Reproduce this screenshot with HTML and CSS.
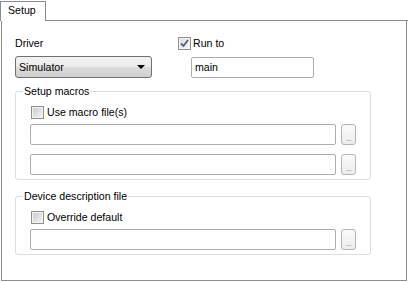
FILE: index.html
```html
<!DOCTYPE html>
<html lang="en">
  <head>
    <meta charset="UTF-8" />
    <title>Setup</title>
    <link rel="stylesheet" href="styles.css">
  </head>
  <body>
    <div class="tabstrip">
      <div class="tab">Setup</div>
      <div class="tab-fill"></div>
    </div>
    <div class="panel">
      <div class="top-row">
        <div class="driver">
          <div class="label">Driver</div>
          <div class="combo">
            <span>Simulator</span>
            <span class="arrow"></span>
          </div>
        </div>
        <div class="runto">
          <label class="check">
            <span class="box checked">
              <svg width="9" height="9" viewBox="0 0 9 9">
                <path d="M1 4.5 L3.5 7 L8 1" fill="none" stroke="#4d6185" stroke-width="1.8" />
              </svg>
            </span>
            Run to
          </label>
          <div class="textbox short">main</div>
        </div>
      </div>

      <fieldset class="group">
        <legend>Setup macros</legend>
        <label class="check"><span class="box"></span>Use macro file(s)</label>
        <div class="file-row first">
          <div class="textbox wide"></div>
          <div class="browse">...</div>
        </div>
        <div class="file-row">
          <div class="textbox wide"></div>
          <div class="browse">...</div>
        </div>
      </fieldset>

      <fieldset class="group second">
        <legend>Device description file</legend>
        <label class="check"><span class="box"></span>Override default</label>
        <div class="file-row first">
          <div class="textbox wide"></div>
          <div class="browse">...</div>
        </div>
      </fieldset>
    </div>
  </body>
</html>
```

FILE: styles.css
```css
body {
  margin: 0;
  background-color: #ffffff;
  font-family: "Liberation Sans", Arial, sans-serif;
  font-size: 10.6px;
  line-height: 13px;
  color: #000000;
}

.tabstrip {
  display: flex;
  align-items: flex-end;
  height: 21px;
}

.tab {
  width: 46px;
  height: 20px;
  padding: 2px 0 0 7px;
  box-sizing: border-box;
  border: 1px solid #898c95;
  border-bottom: none;
  background-color: #ffffff;
}

.tab-fill {
  flex: 1;
  height: 20px;
  border-bottom: 1px solid #898c95;
  box-sizing: border-box;
}

.panel {
  margin-left: 1px;
  width: 406px;
  height: 260px;
  box-sizing: border-box;
  border: 1px solid #898c95;
  border-top: none;
  padding: 16px 0 0 13px;
  background-color: #ffffff;
}

.top-row {
  display: flex;
}

.driver {
  width: 137px;
}

.combo {
  margin-top: 6px;
  height: 22px;
  box-sizing: border-box;
  border: 1px solid #707070;
  border-radius: 3px;
  background: linear-gradient(#f2f2f2 0%, #ebebeb 50%, #dddddd 50%, #cfcfcf 100%);
  display: flex;
  align-items: center;
  justify-content: space-between;
  padding: 0 6px 0 3px;
}

.arrow {
  width: 0;
  height: 0;
  border-left: 4px solid transparent;
  border-right: 4px solid transparent;
  border-top: 4px solid #000000;
}

.runto {
  margin-left: 25px;
}

.check {
  display: flex;
  align-items: center;
  height: 13px;
  gap: 3px;
}

.runto .check {
  margin-left: 1px;
  gap: 2px;
}

.box {
  width: 13px;
  height: 13px;
  box-sizing: border-box;
  border: 1px solid #8e8f8f;
  background: linear-gradient(135deg, #c9c9c9, #f5f5f5);
  box-shadow: inset 0 0 0 1px #f4f4f4;
  display: flex;
  align-items: center;
  justify-content: center;
}

.box.checked {
  background: linear-gradient(135deg, #dcdcdc, #f8f8f8);
}

.textbox {
  height: 21px;
  box-sizing: border-box;
  border: 1px solid #abadb3;
  border-radius: 2px;
  background-color: #ffffff;
  padding: 3px 0 0 3px;
}

.textbox.short {
  margin: 7px 0 0 14px;
  width: 123px;
}

.group {
  margin: 7px 0 0 0;
  padding: 0 7px 4px 7px;
  width: 356px;
  min-width: 0;
  box-sizing: border-box;
  border: 1px solid #d5dfe5;
  border-radius: 3px;
}

.group.second {
  margin-top: 10px;
}

.group legend {
  padding: 0 1px;
  line-height: 13px;
}

.group .check {
  margin: 8px 0 0 8px;
}

.file-row {
  display: flex;
  margin-top: 9px;
}

.file-row.first {
  margin-top: 5px;
}

.textbox.wide {
  width: 306px;
  margin-left: 7px;
}

.browse {
  margin-left: 5px;
  width: 15px;
  height: 21px;
  box-sizing: border-box;
  border: 1px solid #b5b5b5;
  border-radius: 3px;
  background: linear-gradient(#fafafa, #ececec);
  color: #7a7a7a;
  font-size: 8px;
  line-height: 8px;
  text-align: center;
  padding-top: 10px;
  letter-spacing: -0.5px;
}
```
